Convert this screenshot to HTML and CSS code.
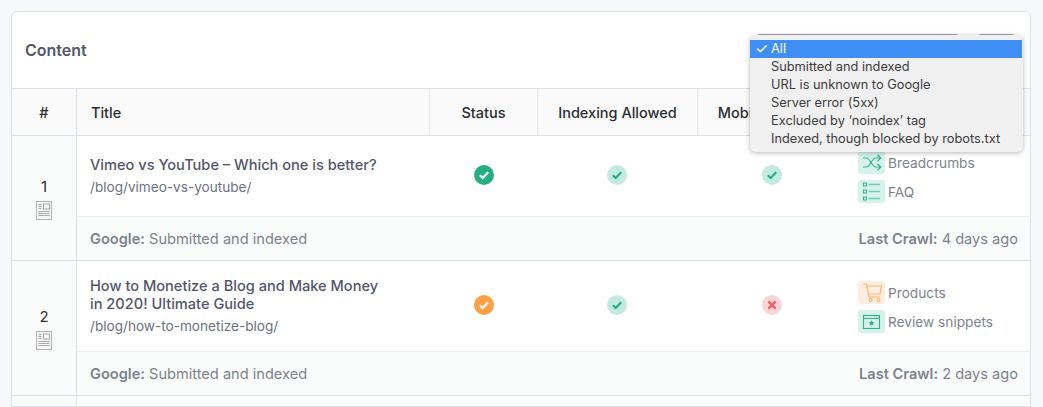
FILE: index.html
```html
<!DOCTYPE html>
<html lang="en">
<head>
<meta charset="utf-8">
<title>Content</title>
<link rel="stylesheet" href="styles.css">
</head>
<body>
<svg class="defs" width="0" height="0" aria-hidden="true">
  <symbol id="doc" viewBox="0 0 16 19">
    <rect x="0.5" y="0.5" width="15" height="18" fill="#f5f5f5" stroke="#b4b4b4"/>
    <path d="M2.500 3.500h3M2.500 5.500h3M2.500 7.500h3M2.500 10.500h11M2.500 12.500h11M2.500 14.500h11" stroke="#ababab" fill="none"/>
    <rect x="7.500" y="3" width="6" height="5" fill="#fff" stroke="#a5a5a5"/>
  </symbol>
  <symbol id="ok" viewBox="0 0 20 20">
    <path d="M5.800 10.200l2.900 2.700 5.500-5.600" fill="none" stroke="currentColor" stroke-width="2.200"/>
  </symbol>
  <symbol id="no" viewBox="0 0 20 20">
    <path d="M6.400 6.400l7.200 7.200M13.600 6.400l-7.200 7.200" fill="none" stroke="currentColor" stroke-width="2.200"/>
  </symbol>
</svg>
<main class="card">
  <header class="card-head">
    <h1 class="card-title">Content</h1>
    <div class="filters"><span class="filter filter-wide"></span><span class="filter filter-small"></span></div>
  </header>
  <div class="row head-row">
    <div class="th th-num">#</div>
    <div class="th th-title">Title</div>
    <div class="th">Status</div>
    <div class="th">Indexing Allowed</div>
    <div class="th th-mobile">Mobile-Friendly</div>
    <div class="th th-last"></div>
  </div>

  <section class="entry">
    <div class="num"><span>1</span><svg class="doc"><use href="#doc"/></svg></div>
    <div class="entry-body">
      <div class="row main-row">
        <div class="td-title">
          <a class="page-title">Vimeo vs YouTube – Which one is better?</a>
          <div class="url">/blog/vimeo-vs-youtube/</div>
        </div>
        <div class="td"><span class="dot dot-green"><svg><use href="#ok"/></svg></span></div>
        <div class="td"><span class="dot dot-mint"><svg><use href="#ok"/></svg></span></div>
        <div class="td"><span class="dot dot-mint"><svg><use href="#ok"/></svg></span></div>
        <div class="td-rich">
          <div class="rich"><span class="chip chip-green">
            <svg viewBox="0 0 27 23"><path d="M5 7h3.500c3.500 0 5.500 9 9 9H22M5 16h3.500c3.500 0 5.500-9 9-9H22M19.500 3.800L22.800 7l-3.300 3.200M19.500 12.800L22.800 16l-3.300 3.200" fill="none" stroke="#35b48d" stroke-width="1.200"/></svg>
          </span>Breadcrumbs</div>
          <div class="rich"><span class="chip chip-green">
            <svg viewBox="0 0 27 23"><path d="M10.500 4.500h11.500M10.500 11.500h11.500M10.500 18.500h11.500" stroke="#72cdb0" stroke-width="1.600" fill="none"/><path d="M5.500 3h3v3h-3zM5.500 10h3v3h-3zM5.500 17h3v3h-3z" fill="none" stroke="#35b48d" stroke-width="1.100"/></svg>
          </span>FAQ</div>
        </div>
      </div>
      <div class="foot-row">
        <div><b>Google:</b> Submitted and indexed</div>
        <div><b>Last Crawl:</b> 4 days ago</div>
      </div>
    </div>
  </section>

  <section class="entry">
    <div class="num"><span>2</span><svg class="doc"><use href="#doc"/></svg></div>
    <div class="entry-body">
      <div class="row main-row">
        <div class="td-title">
          <a class="page-title">How to Monetize a Blog and Make Money in 2020! Ultimate Guide</a>
          <div class="url">/blog/how-to-monetize-blog/</div>
        </div>
        <div class="td"><span class="dot dot-orange"><svg><use href="#ok"/></svg></span></div>
        <div class="td"><span class="dot dot-mint"><svg><use href="#ok"/></svg></span></div>
        <div class="td"><span class="dot dot-red"><svg><use href="#no"/></svg></span></div>
        <div class="td-rich">
          <div class="rich"><span class="chip chip-orange">
            <svg viewBox="0 0 27 23"><path d="M5 3h3.500l2.500 13h11M9 5h14.500l-1.500 8H10.500" fill="none" stroke="#fbb271" stroke-width="1.200"/><circle cx="12.500" cy="19" r="1.500" fill="none" stroke="#fbb271" stroke-width="1.100"/><circle cx="20.500" cy="19" r="1.500" fill="none" stroke="#fbb271" stroke-width="1.100"/></svg>
          </span>Products</div>
          <div class="rich"><span class="chip chip-green">
            <svg viewBox="0 0 27 23"><rect x="5.500" y="5.500" width="16" height="13" fill="none" stroke="#2fb288" stroke-width="1.100"/><path d="M5.500 8.500h16" stroke="#2fb288" stroke-width="1.100"/><path d="M16 7h1M18 7h1M20 7h1" stroke="#72cdb0"/><path d="M13.500 10.500l1 1.600 1.800.2-1.300 1.200.3 1.900-1.800-.9-1.800.9.300-1.900-1.300-1.200 1.800-.2z" fill="#2fb288"/></svg>
          </span>Review snippets</div>
        </div>
      </div>
      <div class="foot-row">
        <div><b>Google:</b> Submitted and indexed</div>
        <div><b>Last Crawl:</b> 2 days ago</div>
      </div>
    </div>
  </section>

  <section class="entry entry-cut">
    <div class="num"></div>
    <div class="entry-body"></div>
  </section>
</main>

<ul class="menu">
  <li class="menu-item is-selected">All</li>
  <li class="menu-item">Submitted and indexed</li>
  <li class="menu-item">URL is unknown to Google</li>
  <li class="menu-item">Server error (5xx)</li>
  <li class="menu-item">Excluded by ‘noindex’ tag</li>
  <li class="menu-item">Indexed, though blocked by robots.txt</li>
</ul>
</body>
</html>
```

FILE: styles.css
```css
* { box-sizing: border-box; }
html, body { height: 407px; overflow: hidden; }
body {
  margin: 0;
  padding: 11px 12px 0 11px;
  background: #f7f8fa;
  font-family: Inter, "Noto Sans", sans-serif;
  font-size: 14px;
  color: #6b7280;
  position: relative;
}
.defs { position: absolute; }
.card {
  border: 1px solid #dde1ea;
  border-radius: 6px 6px 0 0;
  background: #fff;
  height: 396px;
  overflow: hidden;
}
.card-head {
  height: 77px;
  display: flex;
  align-items: center;
  justify-content: space-between;
  padding: 0 14px 0 13px;
  border-bottom: 1px solid #dde1ea;
}
.card-title { margin: 0; font-size: 16px; line-height: 20px; font-weight: 600; color: #53566b; }
.filters { display: flex; gap: 17px; align-self: flex-start; margin-top: 22px; }
.filter { display: block; height: 24px; border: 1px solid #9a9ea8; border-radius: 4px; background: #fff; }
.filter-wide { width: 204px; }
.filter-small { width: 39px; }

.row { display: grid; }
.head-row {
  grid-template-columns: 65px 353px 108px 160px 147px 1fr;
  height: 47px;
  background: #fafafb;
  border-bottom: 1px solid #dde1ea;
}
.th {
  display: flex;
  align-items: center;
  justify-content: center;
  font-size: 14.500px;
  font-weight: 500;
  color: #2b2d33;
  border-right: 1px solid #e6e8ee;
}
.th-num { border-right-color: #dde1ea; }
.th-title { justify-content: flex-start; padding-left: 14px; }
.th-mobile { padding-left: 3px; }
.th-last { border-right: 0; }

.entry { display: grid; grid-template-columns: 65px 1fr; border-bottom: 1px solid #dde1ea; }
.num {
  display: flex;
  flex-direction: column;
  align-items: center;
  justify-content: center;
  gap: 6px;
  padding-top: 2px;
  background: #fafbfb;
  border-right: 1px solid #dde1ea;
  color: #2f3136;
  font-size: 15px;
  line-height: 17px;
}
.doc { width: 16px; height: 19px; display: block; }
.main-row {
  grid-template-columns: 353px 107px 160px 149px 1fr;
  min-height: 80px;
}
.td-title { padding: 16px 40px 16px 13px; display: flex; flex-direction: column; justify-content: center; gap: 4px; }
.page-title { font-size: 14.600px; line-height: 18px; font-weight: 500; color: #53566b; max-width: 300px; }
.url { font-size: 13.600px; line-height: 18px; color: #6b7280; }
.td { display: flex; align-items: center; justify-content: center; padding-bottom: 2px; }
.dot { width: 20px; height: 20px; border-radius: 50%; display: block; }
.dot svg { width: 20px; height: 20px; display: block; }
.dot-green { background: #25ae84; color: #fff; }
.dot-mint { background: #c2eadf; color: #25ae84; }
.dot-orange { background: #fd9f43; color: #fff; }
.dot-red { background: #fbd5d5; color: #ef5a65; }
.td-rich { display: flex; flex-direction: column; justify-content: center; gap: 6px; padding: 2px 0 0 12px; }
.rich { display: flex; align-items: center; gap: 3px; height: 23px; color: #7d838d; font-size: 13.700px; }
.chip { width: 27px; height: 23px; border-radius: 3px; display: block; flex: none; }
.chip svg { width: 27px; height: 23px; display: block; }
.chip-green { background: #d6f2ea; }
.chip-orange { background: #feeee0; }
.foot-row {
  height: 44px;
  display: flex;
  align-items: center;
  justify-content: space-between;
  padding: 0 12px 0 13px;
  background: #fafbfb;
  border-top: 1px solid #eaedf0;
  color: #7d838d;
  font-size: 14.600px;
}
.foot-row b { font-weight: 600; }
.entry-cut { height: 60px; border-bottom: 0; }

.menu {
  position: absolute;
  left: 750px;
  top: 35px;
  width: 273px;
  height: 117px;
  margin: 0;
  padding: 5px 1px 5px 0;
  list-style: none;
  background: #f0f0f0;
  border-radius: 6px;
  box-shadow: 0 1px 5px rgba(0,0,0,.28);
  font-family: Inter, "Liberation Sans", sans-serif;
  font-size: 12.800px;
  color: #3c3c3c;
}
.menu-item { height: 18px; line-height: 17px; padding-left: 21px; position: relative; }
.menu-item.is-selected { background: #3f8ff7; color: #fff; }
.menu-item.is-selected::before { content: "✓"; position: absolute; left: 5px; top: 0; font-size: 15px; }
```
